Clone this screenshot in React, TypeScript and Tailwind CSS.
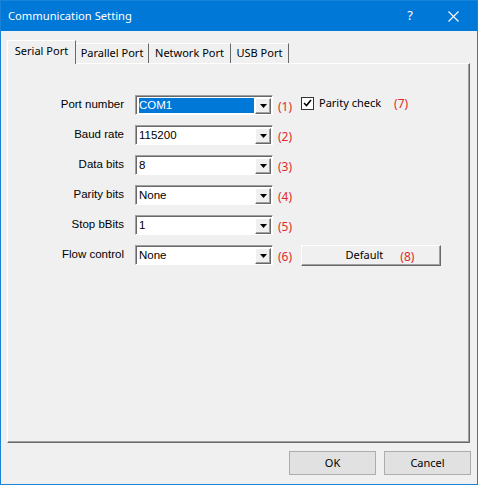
import React from "react";

const seg = { fontFamily: '"Noto Sans", "Open Sans", sans-serif' };
const tah = { fontFamily: '"Liberation Sans", Arial, sans-serif' };

function Arrow() {
  return (
    <svg width="7" height="4" viewBox="0 0 7 4">
      <path d="M0 0H7L3.5 4Z" fill="#000" />
    </svg>
  );
}

function Combo({ value, selected }: { value: string; selected?: boolean }) {
  return (
    <div className="w-[138px] h-[20px] flex border border-t-[#a0a0a0] border-l-[#a0a0a0] border-b-white border-r-white shadow-[inset_1px_1px_0_#696969] bg-white p-[2px] pr-[1px] pb-[1px]">
      <div className="flex-1 flex items-center pl-[1px] mr-[1px]">
        <span
          className={
            "h-full w-full flex items-center text-[11.5px] leading-none " +
            (selected ? "bg-[#0078d7] text-white" : "text-black")
          }
          style={tah}
        >
          {value}
        </span>
      </div>
      <div className="w-[16px] h-[16px] flex items-center justify-center bg-[#f0f0f0] border border-t-white border-l-white border-b-[#696969] border-r-[#696969] shadow-[inset_-1px_-1px_0_#a0a0a0]">
        <Arrow />
      </div>
    </div>
  );
}

function Num({ n }: { n: number }) {
  return (
    <span className="text-[12px] text-[#e02a2a] leading-none" style={seg}>
      ({n})
    </span>
  );
}

function Row({
  label,
  value,
  n,
  selected,
  extra,
}: {
  label: string;
  value: string;
  n: number;
  selected?: boolean;
  extra?: React.ReactNode;
}) {
  return (
    <div className="flex items-center h-[20px]">
      <div className="w-[116px] text-right text-[11.5px] text-black leading-none" style={tah}>
        {label}
      </div>
      <div className="ml-[11px]">
        <Combo value={value} selected={selected} />
      </div>
      <div className="ml-[5px] w-[18px]">
        <Num n={n} />
      </div>
      {extra && <div className="ml-[5px] flex items-center">{extra}</div>}
    </div>
  );
}

export default function App() {
  const tabs = [
    { t: "Parallel Port", w: 73 },
    { t: "Network Port", w: 82 },
    { t: "USB Port", w: 58 },
  ];
  return (
    <div className="w-[478px] h-[485px] bg-[#f0f0f0] border border-[#1883d7] flex flex-col overflow-hidden">
      <div className="h-[30px] bg-[#0078d7] flex items-center text-white shrink-0">
        <span className="pl-[7px] text-[11.2px]" style={seg}>
          Communication Setting
        </span>
        <span className="ml-auto mr-[35px] text-[13px]" style={seg}>
          ?
        </span>
        <svg width="11" height="11" viewBox="0 0 11 11" className="mr-[18px]">
          <path d="M0.5 0.5L10.5 10.5M10.5 0.5L0.5 10.5" stroke="#fff" strokeWidth="1.1" />
        </svg>
      </div>
      <div className="flex flex-col px-[6px] pt-[9px]">
        <div className="flex items-end h-[23px] relative z-10">
          <div
            className="w-[69px] h-[24px] -mb-[1px] bg-[#f0f0f0] border-t border-l border-t-white border-l-white border-r border-r-[#696969] flex items-center justify-center text-[11px] text-black pb-[2px]"
            style={seg}
          >
            Serial Port
          </div>
          {tabs.map((tb) => (
            <div
              key={tb.t}
              className="h-[20px] border-t border-t-white border-r border-r-[#696969] flex items-center justify-center text-[11px] text-black"
              style={{ ...seg, width: tb.w }}
            >
              {tb.t}
            </div>
          ))}
        </div>
        <div className="w-[463px] h-[380px] border border-t-white border-l-white border-r-[#696969] border-b-[#696969] shadow-[inset_-1px_-1px_0_#a0a0a0] pt-[31px]">
          <div className="flex flex-col gap-[10px]">
            <Row
              label="Port number"
              value="COM1"
              n={1}
              selected
              extra={
                <div className="flex items-center -mt-[4px]">
                  <div className="w-[13px] h-[13px] bg-white border border-[#333] flex items-center justify-center">
                    <svg width="9" height="8" viewBox="0 0 9 8">
                      <path d="M1 4L3.5 6.5L8 1" stroke="#000" strokeWidth="1.6" fill="none" />
                    </svg>
                  </div>
                  <span className="ml-[5px] text-[11px] text-black" style={seg}>
                    Parity check
                  </span>
                  <span className="ml-[13px] -mt-[3px]">
                    <Num n={7} />
                  </span>
                </div>
              }
            />
            <Row label="Baud rate" value="115200" n={2} />
            <Row label="Data bits" value="8" n={3} />
            <Row label="Parity bits" value="None" n={4} />
            <Row label="Stop bBits" value="1" n={5} />
            <Row
              label="Flow control"
              value="None"
              n={6}
              extra={
                <div className="w-[140px] h-[21px] pl-[18px] bg-[#f0f0f0] border border-t-white border-l-white border-b-[#696969] border-r-[#696969] shadow-[inset_-1px_-1px_0_#a0a0a0] flex items-center justify-center">
                  <span className="text-[11px] text-black" style={seg}>
                    Default
                  </span>
                  <span className="ml-[17px]">
                    <Num n={8} />
                  </span>
                </div>
              }
            />
          </div>
        </div>
        <div className="flex justify-end gap-[8px] mt-[8px]">
          <div className="w-[87px] h-[24px] bg-[#e1e1e1] border border-[#adadad] flex items-center justify-center text-[11px] text-black" style={seg}>
            OK
          </div>
          <div className="w-[87px] h-[24px] bg-[#e1e1e1] border border-[#adadad] flex items-center justify-center text-[11px] text-black" style={seg}>
            Cancel
          </div>
        </div>
      </div>
    </div>
  );
}
